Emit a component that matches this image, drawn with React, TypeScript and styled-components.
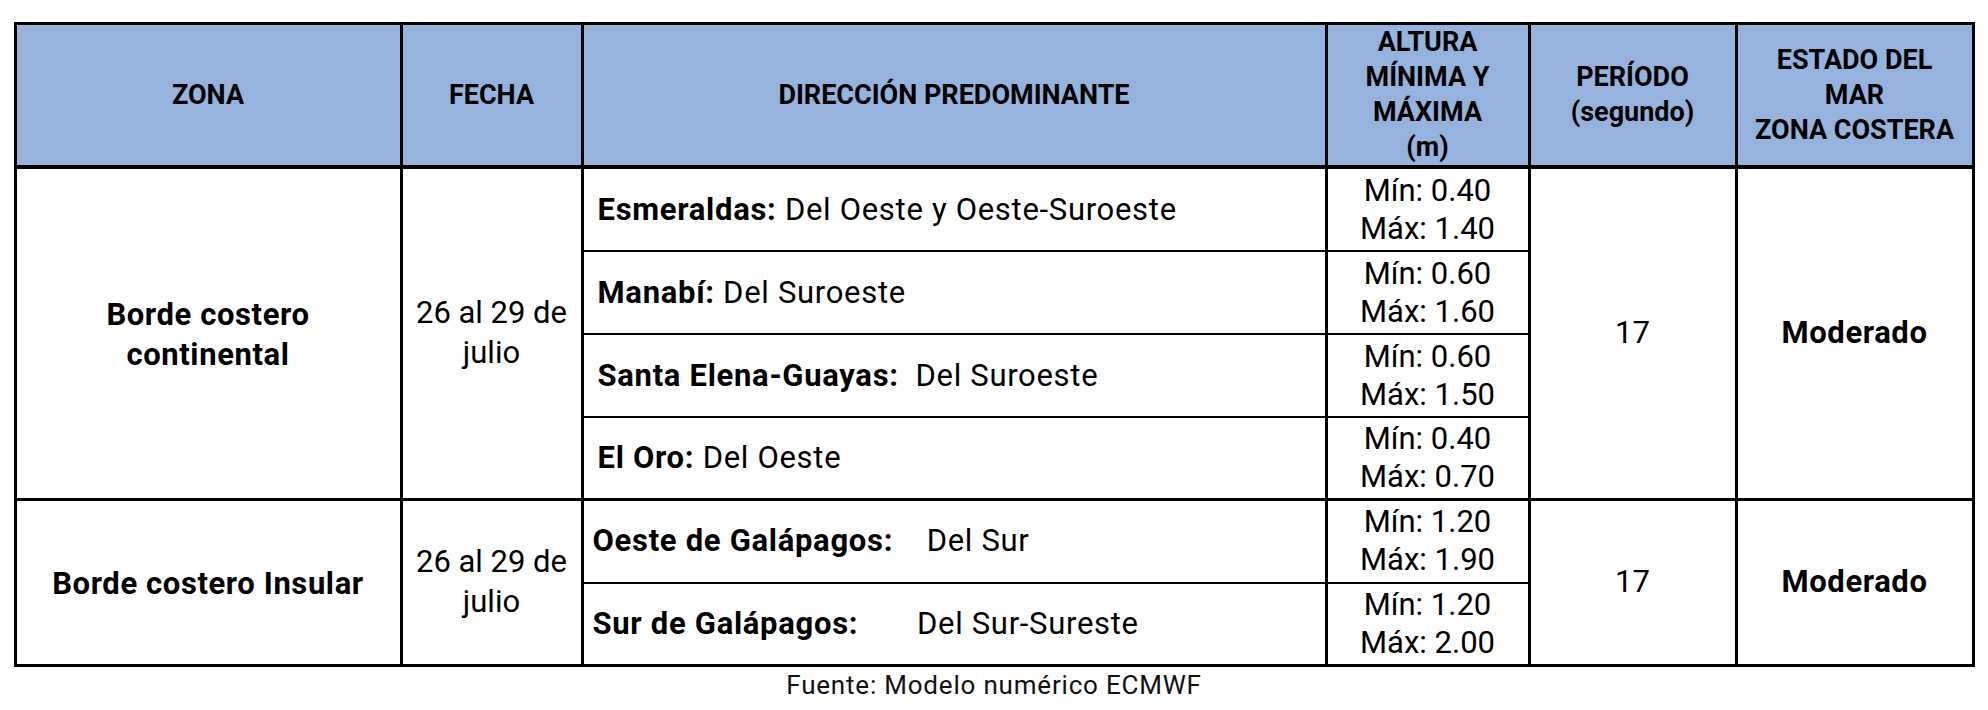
import React from 'react';
import styled, { createGlobalStyle } from 'styled-components';

interface Direction {
  place: string;
  text: string;
  min: string;
  max: string;
  tight?: boolean;
}

interface Zone {
  name: string[];
  date: string[];
  period: string;
  state: string;
  rows: Direction[];
}

const zones: Zone[] = [
  {
    name: ['Borde costero', 'continental'],
    date: ['26 al 29 de', 'julio'],
    period: '17',
    state: 'Moderado',
    rows: [
      { place: 'Esmeraldas:', text: ' Del Oeste y Oeste-Suroeste', min: '0.40', max: '1.40' },
      { place: 'Manabí:', text: ' Del Suroeste', min: '0.60', max: '1.60' },
      { place: 'Santa Elena-Guayas:', text: '  Del Suroeste', min: '0.60', max: '1.50' },
      { place: 'El Oro:', text: ' Del Oeste', min: '0.40', max: '0.70' },
    ],
  },
  {
    name: ['Borde costero Insular'],
    date: ['26 al 29 de', 'julio'],
    period: '17',
    state: 'Moderado',
    rows: [
      { place: 'Oeste de Galápagos:', text: '    Del Sur', min: '1.20', max: '1.90', tight: true },
      { place: 'Sur de Galápagos:', text: '       Del Sur-Sureste', min: '1.20', max: '2.00', tight: true },
    ],
  },
];

const colWidths = [386, 181, 744, 203, 207, 237];
const rowHeights = [[84, 83, 83, 82], [84, 82]];

function App() {
  return (
    <Page>
      <GlobalStyle />
      <Wrapper>
        <Table>
          <colgroup>
            {colWidths.map((w, i) => (
              <Col key={i} $w={w} />
            ))}
          </colgroup>
          <thead>
            <HeadRow>
              <Th>ZONA</Th>
              <Th>FECHA</Th>
              <Th>DIRECCIÓN PREDOMINANTE</Th>
              <Th>
                ALTURA
                <br />
                MÍNIMA Y
                <br />
                MÁXIMA
                <br />
                (m)
              </Th>
              <Th>
                PERÍODO
                <br />
                (segundo)
              </Th>
              <Th>
                ESTADO DEL
                <br />
                MAR
                <br />
                ZONA COSTERA
              </Th>
            </HeadRow>
          </thead>
          <tbody>
            {zones.map((zone, zi) =>
              zone.rows.map((row, ri) => (
                <Row key={`${zi}-${ri}`} $h={rowHeights[zi][ri]}>
                  {ri === 0 && (
                    <ZoneCell rowSpan={zone.rows.length}>
                      {zone.name.map((n, k) => (
                        <Line key={k}>{n}</Line>
                      ))}
                    </ZoneCell>
                  )}
                  {ri === 0 && (
                    <DateCell rowSpan={zone.rows.length}>
                      {zone.date.map((n, k) => (
                        <Line key={k}>{n}</Line>
                      ))}
                    </DateCell>
                  )}
                  <DirCell $first={ri === 0} $tight={!!row.tight}>
                    <Place>{row.place}</Place>
                    {row.text}
                  </DirCell>
                  <HeightCell $first={ri === 0}>
                    <Line>Mín: {row.min}</Line>
                    <Line>Máx: {row.max}</Line>
                  </HeightCell>
                  {ri === 0 && <PeriodCell rowSpan={zone.rows.length}>{zone.period}</PeriodCell>}
                  {ri === 0 && <StateCell rowSpan={zone.rows.length}>{zone.state}</StateCell>}
                </Row>
              ))
            )}
          </tbody>
        </Table>
        <Source>Fuente: Modelo numérico ECMWF</Source>
      </Wrapper>
    </Page>
  );
}

export default App;

const GlobalStyle = createGlobalStyle`
  html, body {
    margin: 0;
    padding: 0;
    background: #ffffff;
  }
  body {
    font-family: Roboto, "Liberation Sans", sans-serif;
    color: #000000;
  }
`;

const Page = styled.div`
  width: 1988px;
  height: 710px;
  padding: 22px 0 0 14px;
  box-sizing: border-box;
`;

const Wrapper = styled.div`
  display: flex;
  flex-direction: column;
  align-items: center;
  width: 1960px;
`;

const Table = styled.table`
  border-collapse: collapse;
  table-layout: fixed;
  width: 1960px;
  border: 3px solid #000;
`;

const Col = styled.col<{ $w: number }>`
  width: ${(p) => p.$w}px;
`;

const HeadRow = styled.tr`
  height: 142px;
`;

const Th = styled.th`
  background-color: #95b3dd;
  border: 3px solid #000;
  border-bottom-width: 4px;
  font-size: 27px;
  font-weight: 700;
  line-height: 35px;
  text-align: center;
  vertical-align: middle;
  padding: 0 2px;
`;

const Row = styled.tr<{ $h: number }>`
  height: ${(p) => p.$h}px;
`;

const Cell = styled.td`
  border: 3px solid #000;
  font-size: 31px;
  line-height: 40px;
  vertical-align: middle;
  padding: 0;
`;

const ZoneCell = styled(Cell)`
  text-align: center;
  font-weight: 700;
  letter-spacing: 0.6px;
  padding-top: 3px;
`;

const DateCell = styled(Cell)`
  text-align: center;
`;

const DirCell = styled(Cell)<{ $first: boolean; $tight: boolean }>`
  border-top: ${(p) => (p.$first ? '3px' : '2px')} solid #000;
  border-bottom: 2px solid #000;
  padding-left: ${(p) => (p.$tight ? '9px' : '14px')};
  white-space: pre;
  letter-spacing: 0.7px;
`;

const HeightCell = styled(Cell)<{ $first: boolean }>`
  border-top: ${(p) => (p.$first ? '3px' : '2px')} solid #000;
  border-bottom: 2px solid #000;
  text-align: center;
  line-height: 38px;
`;

const PeriodCell = styled(Cell)`
  text-align: center;
`;

const StateCell = styled(Cell)`
  text-align: center;
  font-weight: 700;
  letter-spacing: 0.6px;
`;

const Line = styled.div``;

const Place = styled.span`
  font-weight: 700;
`;

const Source = styled.div`
  margin-top: 2px;
  font-size: 26px;
  line-height: 32px;
  letter-spacing: 0.8px;
  color: #111;
`;
